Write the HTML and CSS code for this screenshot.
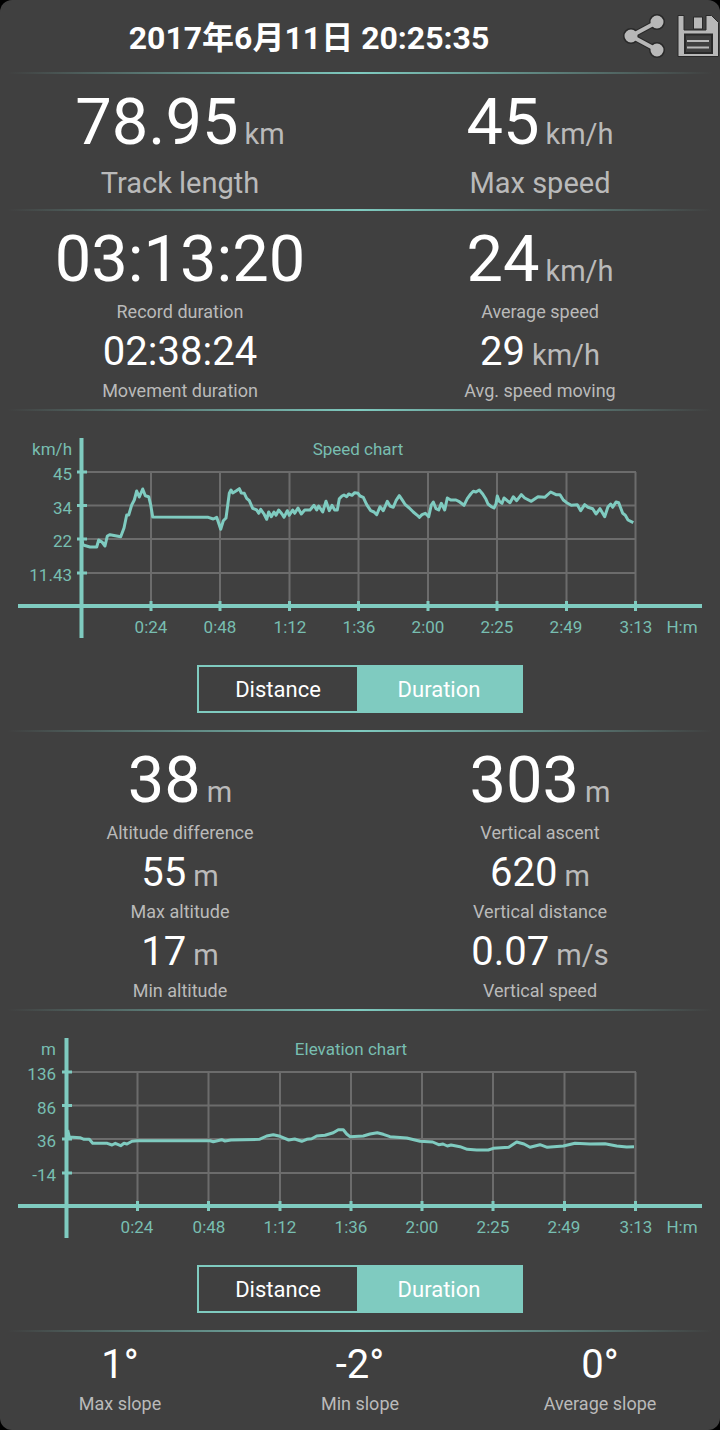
FILE: index.html
```html
<!DOCTYPE html>
<html lang="en">
<head>
<meta charset="utf-8">
<meta name="viewport" content="width=device-width, initial-scale=1">
<title>Track statistics</title>
<link rel="stylesheet" href="styles.css">
</head>
<body>
<main class="screen">
  <header class="header">
    <h1 class="title">2017年6月11日 20:25:35</h1>
    <button class="icon-button" type="button" aria-label="Share">
      <svg width="48" height="48" viewBox="0 0 48 48" aria-hidden="true">
        <g class="icon-outline"><path d="M36 10 10 24 36 38"/><circle cx="10" cy="24" r="5"/><circle cx="36" cy="10" r="5"/><circle cx="36" cy="38" r="5"/></g>
        <g class="icon-body"><path d="M36 10 10 24 36 38"/><circle cx="10" cy="24" r="5"/><circle cx="36" cy="10" r="5"/><circle cx="36" cy="38" r="5"/></g>
      </svg>
    </button>
    <button class="icon-button" type="button" aria-label="Save">
      <svg width="48" height="48" viewBox="0 0 48 48" aria-hidden="true">
        <path class="disk" d="M6 3.500H12V18H34V3.500H39.500L46.500 10.500V44.500H6Z"/>
        <path class="disk" d="M21.500 5H30.500V17H21.500Z"/>
        <path class="disk-label" d="M13 22.500H40V41H13Z"/>
        <path class="disk-line" d="M15 29H37M15 35.500H37"/>
      </svg>
    </button>
  </header>

  <section class="section columns">
    <div class="stat"><p class="value large">78.95 <span class="unit">km</span></p><p class="label big">Track length</p></div>
    <div class="stat"><p class="value large">45 <span class="unit">km/h</span></p><p class="label big">Max speed</p></div>
  </section>

  <section class="section columns">
    <div class="stat"><p class="value large">03:13:20</p><p class="label">Record duration</p></div>
    <div class="stat"><p class="value large">24 <span class="unit">km/h</span></p><p class="label">Average speed</p></div>
    <div class="stat"><p class="value">02:38:24</p><p class="label">Movement duration</p></div>
    <div class="stat"><p class="value">29 <span class="unit">km/h</span></p><p class="label">Avg. speed moving</p></div>
  </section>

  <section class="section chart-section">
    <svg class="chart" viewBox="0 411 720 240" role="img" aria-label="Speed chart">
      <path class="grid" d="M82 472H636M82 505.500H636M82 539H636M82 573H636M151 472V606M220 472V606M289.500 472V606M358.500 472V606M428 472V606M497 472V606M566.500 472V606M635.500 472V606"/>
      <path class="axis" d="M81.500 438V638M18 606H702"/>
      <path class="tick" d="M77 472H87M77 505.500H87M77 539H87M77 573H87M151 601V611M220 601V611M289.500 601V611M358.500 601V611M428 601V611M497 601V611M566.500 601V611M635.500 601V611"/>
      <polyline class="series" points="82,540 83,545 90,547 96.700,547 98.700,540 102,542 105,546 107.300,536 110,534.700 120.700,536.700 124,528 126.700,515 128.700,515 131.700,505 134.300,500 136.700,491 139.300,497 142.700,489 145.300,495.700 148.700,496.700 150.700,505 152.700,517 208.300,517.300 213.300,519 216.700,517.300 220.700,529.300 223.300,520.700 226,518 229.300,493.300 231,490 232.700,493 236,491 239.300,488.700 241.300,493 244.300,493.300 246.700,498.300 249.300,500.700 252.700,508.300 256.700,510 258.700,513.300 260.700,509.300 264,514 266.700,519.300 268.700,512 271.300,516.700 274,512 276,515.300 278.700,510 282,514 284,517.300 287.300,510.700 289.300,515.300 292.700,510 294.700,513.300 298,508 301.300,514 304.700,510 310,510 314,505.300 316.700,510 318.700,506 322.700,512 326,501.300 329.300,510.700 332,505.300 334.700,510 337.300,510 339.300,498.700 342,496 344,495 346.700,496.700 348.700,494 352,495.300 354.700,492.700 358,493.300 360,496 363.300,497.300 366.700,504.700 370.700,510.700 374,512 376.700,514.700 380,506.700 383.300,510.700 387.300,501.300 390,506 393.300,507.300 396,500.700 399.300,495.700 402.700,500.700 405.300,504.700 409.300,508 413.300,512 417.300,515.300 419.300,517.300 422,514.700 425.300,513.300 428.700,516.700 431.300,505 433.300,502 436,508.700 438.700,510 441.300,503.300 444.700,510 447.300,498 450.700,500 456,500 458.700,501.300 464,505.300 467.300,498.700 470.700,494 473.300,491.300 476,492 479.300,490 482.700,494 486,499.300 488,504 491.300,506.700 494,508 496,504 497.300,496 499.300,501.300 502,503.300 504,498 507.300,500.700 510,502.700 513.300,496.700 516.700,500.700 521.300,494.700 524.700,498 531.300,501.300 538,496.700 544.700,497.300 550.700,492 556,494.700 560,494.700 563.300,500 566.700,502.700 571.300,505.300 577.300,504.700 580.700,510.700 584.700,504.700 588,507.300 592.700,508.700 596,514 600,508.700 604.700,516.700 608,506.700 610.700,504 612.700,507.300 616,502 618.700,502.700 622.700,513.300 625.300,515.300 628,520 633.300,522.700"/>
      <g class="chart-text end"><text x="72" y="455">km/h</text><text x="72" y="480">45</text><text x="72" y="514">34</text><text x="72" y="547">22</text><text x="72" y="581">11.43</text></g>
      <g class="chart-text"><text x="358" y="455">Speed chart</text><text x="151" y="633">0:24</text><text x="220" y="633">0:48</text><text x="290" y="633">1:12</text><text x="359" y="633">1:36</text><text x="428" y="633">2:00</text><text x="497" y="633">2:25</text><text x="566" y="633">2:49</text><text x="636" y="633">3:13</text><text x="682" y="633">H:m</text></g>
    </svg>
    <div class="switch" role="group" aria-label="Speed chart axis">
      <button class="option" type="button" aria-pressed="false">Distance</button>
      <button class="option selected" type="button" aria-pressed="true">Duration</button>
    </div>
  </section>

  <section class="section columns">
    <div class="stat"><p class="value large">38 <span class="unit">m</span></p><p class="label">Altitude difference</p></div>
    <div class="stat"><p class="value large">303 <span class="unit">m</span></p><p class="label">Vertical ascent</p></div>
    <div class="stat"><p class="value">55 <span class="unit">m</span></p><p class="label">Max altitude</p></div>
    <div class="stat"><p class="value">620 <span class="unit">m</span></p><p class="label">Vertical distance</p></div>
    <div class="stat"><p class="value">17 <span class="unit">m</span></p><p class="label">Min altitude</p></div>
    <div class="stat"><p class="value">0.07 <span class="unit">m/s</span></p><p class="label">Vertical speed</p></div>
  </section>

  <section class="section chart-section">
    <svg class="chart" viewBox="0 411 720 240" role="img" aria-label="Elevation chart">
      <path class="grid" d="M67 472H636M67 505.500H636M67 539H636M67 573H636M137.500 472V606M208.500 472V606M280 472V606M351 472V606M422 472V606M493 472V606M564.500 472V606M635.500 472V606"/>
      <path class="axis" d="M66.500 438V638M18 606H702"/>
      <path class="tick" d="M62 472H72M62 505.500H72M62 539H72M62 573H72M137.500 601V611M208.500 601V611M280 601V611M351 601V611M422 601V611M493 601V611M564.500 601V611M635.500 601V611"/>
      <polyline class="series" points="67.700,530 69.300,537 80,537.700 84,539.300 89.300,539.300 92.700,543.300 107.300,543.300 112,545 115.300,543.300 120.700,545.700 124,543.300 127,544 132,541.300 137.300,540.700 210,540.700 213.300,541.700 221.700,539.700 225,541 231,540 259.300,539.300 266.700,536 273.300,534.700 280,536.300 288.700,540 294.700,539 301.700,541.300 306.700,539.300 311.700,538.700 316.700,536 325,535.300 333.300,532.700 338.300,529.700 343.300,529.700 346.700,534 350,536.700 363.300,536 370,534 377.300,532.700 383.300,534.300 390,536.700 406.700,538 420,541.300 432.700,542 438.700,544.700 443,544 447.300,546 451,545 460,546.700 467.300,549.300 476.700,550 488.300,550 493.300,548.300 508.700,547.300 516.700,542 524,544 530,547.300 540,544.700 547.300,547.300 563.300,546 575,543.300 590,544 605,543.700 616.700,546 626.700,547 634,546.700"/>
      <g class="chart-text end"><text x="56" y="455">m</text><text x="56" y="480">136</text><text x="56" y="514">86</text><text x="56" y="547">36</text><text x="56" y="581">-14</text></g>
      <g class="chart-text"><text x="351" y="455">Elevation chart</text><text x="137" y="633">0:24</text><text x="209" y="633">0:48</text><text x="280" y="633">1:12</text><text x="351" y="633">1:36</text><text x="422" y="633">2:00</text><text x="493" y="633">2:25</text><text x="564" y="633">2:49</text><text x="636" y="633">3:13</text><text x="682" y="633">H:m</text></g>
    </svg>
    <div class="switch" role="group" aria-label="Elevation chart axis">
      <button class="option" type="button" aria-pressed="false">Distance</button>
      <button class="option selected" type="button" aria-pressed="true">Duration</button>
    </div>
  </section>

  <section class="section columns three">
    <div class="stat"><p class="value">1°</p><p class="label">Max slope</p></div>
    <div class="stat"><p class="value">-2°</p><p class="label">Min slope</p></div>
    <div class="stat"><p class="value">0°</p><p class="label">Average slope</p></div>
  </section>
</main>
</body>
</html>
```

FILE: styles.css
```css
:root {
  --accent: #7fcbc0;
  --surface: #404040;
  --muted: #bababa;
}

* {
  box-sizing: border-box;
}

body {
  margin: 0;
  background: #000;
  color: #fff;
  font-family: Roboto, "Noto Sans CJK SC", sans-serif;
}

h1, p {
  margin: 0;
}

.screen {
  min-height: 100vh;
  background: var(--surface);
  border-radius: 12px;
}

.header {
  display: flex;
  align-items: center;
  height: 72px;
}

.title {
  flex: 1;
  padding-top: 3px;
  font-size: 32px;
  font-weight: 700;
  line-height: 40px;
  text-align: center;
}

.icon-button {
  display: flex;
  margin-left: 3px;
  padding: 0;
  border: 0;
  background: none;
}

.icon-outline, .icon-body {
  stroke-width: 3;
  fill: #b8b8b8;
  stroke: #b8b8b8;
}

.icon-outline {
  stroke-width: 6;
  fill: #292929;
  stroke: #292929;
}

.icon-outline path, .icon-body path {
  fill: none;
}

.icon-body path {
  stroke-width: 4;
}

.disk {
  fill: #b8b8b8;
  stroke: #292929;
  stroke-width: 1;
}

.disk-label {
  fill: #404040;
  stroke: #292929;
  stroke-width: 2;
}

.disk-line {
  fill: none;
  stroke: #b8b8b8;
  stroke-width: 2;
}

.section {
  padding: 0 0 3px;
}

.section::before {
  content: "";
  display: block;
  grid-column: 1 / -1;
  width: 100%;
  height: 2px;
  margin-bottom: 9px;
  background: linear-gradient(90deg, transparent 1%, var(--accent) 50%, transparent 99%);
}

.columns {
  display: grid;
  grid-template-columns: repeat(2, 1fr);
}

.three {
  grid-template-columns: repeat(3, 1fr);
}

.three::before {
  margin-bottom: 8px;
}

.stat {
  text-align: center;
}

.value {
  display: flex;
  align-items: baseline;
  justify-content: center;
  gap: 7px;
  font-size: 40px;
  line-height: 50px;
}

.large {
  gap: 6px;
  font-size: 65px;
  line-height: 78px;
}

.unit {
  color: var(--muted);
  font-size: 29px;
  line-height: 1;
}

.label {
  margin-bottom: 2px;
  color: var(--muted);
  font-size: 18px;
  line-height: 27px;
}

.big {
  margin-bottom: 0;
  font-size: 29px;
  line-height: 45px;
}

.chart-section {
  display: flex;
  flex-direction: column;
  align-items: center;
  padding-bottom: 17px;
}

.chart-section::before {
  margin-bottom: 0;
}

.chart {
  display: block;
  width: 100%;
}

.grid {
  fill: none;
  stroke: #6c6c6c;
  stroke-width: 2;
}

.axis {
  fill: none;
  stroke: var(--accent);
  stroke-width: 4;
}

.tick {
  fill: none;
  stroke: var(--accent);
  stroke-width: 3;
}

.series {
  fill: none;
  stroke: var(--accent);
  stroke-width: 3;
  stroke-linejoin: round;
}

.chart-text {
  fill: #78beb1;
  font-size: 17px;
  text-anchor: middle;
}

.end {
  text-anchor: end;
}

.switch {
  display: grid;
  grid-template-columns: 158fr 164fr;
  width: 326px;
  height: 48px;
  margin-top: 14px;
  border: 2px solid var(--accent);
}

.option {
  padding: 0;
  border: 0;
  background: transparent;
  color: #fff;
  font: inherit;
  font-size: 22px;
}

.selected {
  background: var(--accent);
}
```
